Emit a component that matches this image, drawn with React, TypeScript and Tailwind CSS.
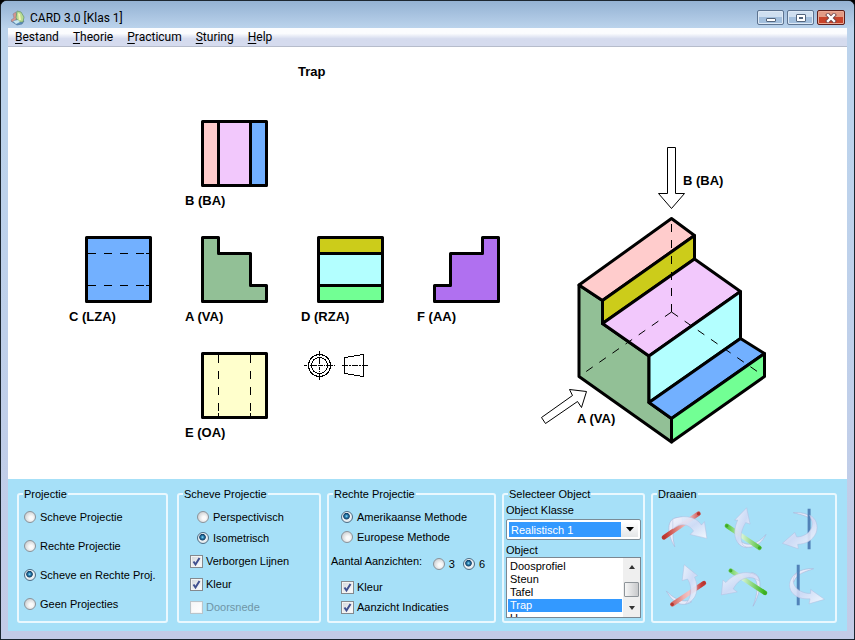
import { useState, type ReactNode } from "react";

const MENU = ["Bestand", "Theorie", "Practicum", "Sturing", "Help"];
const OBJECTS = ["Doosprofiel", "Steun", "Tafel", "Trap", "U"];

const C = {
  pink: "#ffcccc",
  lilac: "#f2c8fc",
  blue: "#72b0ff",
  sage: "#92c096",
  olive: "#cccc1a",
  cyan: "#b3ffff",
  mint: "#72ff94",
  purple: "#b070f0",
  cream: "#ffffcc",
};

function Logo() {
  return (
    <svg className="h-4 w-4" viewBox="0 0 16 16" aria-hidden="true">
      <path d="M1 11 6 9 14 11 12 14 7 15Z" fill="#5b8fc0" stroke="#4c6f93" strokeWidth=".6" />
      <path d="M3 4 6 2 7 9 2 12 1 10 4 8Z" fill="#d9958c" stroke="#8d8291" strokeWidth=".6" />
      <path d="M7 1 11 2 14 7 13 12 9 12 6 8Z" fill="#b8dc92" stroke="#63906a" strokeWidth=".7" />
      <path d="M8 3 10 4 11 10 9 10Z" fill="#f5f3b4" />
      <path d="M3 11 8 10 10 12 6 14Z" fill="#c9e7ef" />
    </svg>
  );
}

function TitleBar() {
  const button =
    "flex h-[15px] w-[27px] items-center justify-center rounded-[2px] border border-[#5d7390] bg-linear-to-b from-[#cfdff0] from-50% to-[#a3bfdd] to-50% shadow-[inset_0_0_0_1px_#dce8f5]";
  return (
    <header className="flex h-[27px] items-center justify-between bg-linear-to-b from-[#94b2d3] to-[#bbd3ec] pr-[9px] pl-[9px]">
      <h1 className="flex items-center gap-1 pt-[6px] text-[12px] leading-4">
        <Logo />
        CARD 3.0 [Klas 1]
      </h1>
      <div className="flex gap-[3px] pt-[6px]">
        <button aria-label="Minimaliseren" className={button}>
          <svg width="12" height="10" viewBox="0 0 12 10">
            <rect x="1.5" y="5.5" width="9" height="3" rx=".5" fill="#fff" stroke="#53657d" />
          </svg>
        </button>
        <button aria-label="Maximaliseren" className={button}>
          <svg width="12" height="10" viewBox="0 0 12 10">
            <rect x="1.5" y="1.5" width="9" height="7" rx=".5" fill="#fff" stroke="#53657d" />
            <rect x="4.5" y="4.5" width="3" height="1" fill="#8ba4c0" stroke="#53657d" />
          </svg>
        </button>
        <button
          aria-label="Sluiten"
          className="flex h-[15px] w-[28px] items-center justify-center rounded-[2px] border border-[#5e1f1c] bg-linear-to-b from-[#e29b85] from-50% to-[#c8432a] to-50% shadow-[inset_0_0_0_1px_#eba995]"
        >
          <svg width="12" height="10" viewBox="0 0 12 10">
            <path d="M3 2 9 8M9 2 3 8" stroke="#6d4247" strokeWidth="4" strokeLinecap="square" />
            <path d="M3 2 9 8M9 2 3 8" stroke="#fff" strokeWidth="2.4" strokeLinecap="square" />
          </svg>
        </button>
      </div>
    </header>
  );
}

function MenuBar() {
  return (
    <nav className="flex h-[19px] items-center gap-[14px] border-b border-[#b6bccb] bg-linear-to-b from-[#fbfcfe] from-30% to-[#d5dbee] to-60% px-[7px] text-[12px] leading-4">
      {MENU.map((item) => (
        <button key={item}>
          <span className="underline underline-offset-2">{item[0]}</span>
          {item.slice(1)}
        </button>
      ))}
    </nav>
  );
}

function Views() {
  return (
    <g stroke="#000" strokeWidth="3" strokeLinejoin="round">
      <path d="M202.500 121.500h16v64h-16z" fill={C.pink} />
      <path d="M218.500 121.500h32v64h-32z" fill={C.lilac} />
      <path d="M250.500 121.500h16v64h-16z" fill={C.blue} />

      <path d="M86.500 237.500h64v64h-64z" fill={C.blue} />
      <path d="M202.500 237.500h16v16h32v32h16v16h-64z" fill={C.sage} />
      <path d="M318.500 237.500h64v16h-64z" fill={C.olive} />
      <path d="M318.500 253.500h64v32h-64z" fill={C.cyan} />
      <path d="M318.500 285.500h64v16h-64z" fill={C.mint} />
      <path d="M498.500 237.500h-16v16h-32v32h-16v16h64z" fill={C.purple} />
      <path d="M202.500 353.500h64v64h-64z" fill={C.cream} />

      {/* hidden edges */}
      <g strokeWidth="1" strokeDasharray="8 8">
        <path d="M88 253.500H146M146 253.500H150M88 285.500H146M146 285.500H150" />
        <path d="M218.500 355V413M218.500 413V417M250.500 355V413M250.500 413V417" />
      </g>
    </g>
  );
}

function ProjectionSymbol() {
  return (
    <g stroke="#000" fill="none" shapeRendering="crispEdges">
      <circle cx="319.500" cy="365.500" r="11" />
      <circle cx="319.500" cy="365.500" r="8" />
      <path d="M304 365.500H335M319.500 351V380" strokeDasharray="3 1 1 1 7 1 1 1" />
      <path d="M344.500 357.500 363.500 354.500V376.500L344.500 373.500Z" />
      <path d="M342 365.500H368" strokeDasharray="6 1 2 1" />
    </g>
  );
}

function Isometric() {
  return (
    <>
      <g stroke="#000" strokeWidth="3" strokeLinejoin="round">
        <path d="M579 285 602.500 300.500V323.500L649 356V402.500L671.500 418.500V442L579 376.500Z" fill={C.sage} />
        <path d="M671.500 218.500 694.500 235.500 602.500 300.500 579 285Z" fill={C.pink} />
        <path d="M694.500 235.500V259L602.500 323.500V300.500Z" fill={C.olive} />
        <path d="M694.500 259 740.500 291.500 649 356 602.500 323.500Z" fill={C.lilac} />
        <path d="M740.500 291.500V338.500L649 402.500V356Z" fill={C.cyan} />
        <path d="M740.500 338.500 764.500 353.500 671.500 418.500 649 402.500Z" fill={C.blue} />
        <path d="M764.500 353.500V376.500L671.500 442V418.500Z" fill={C.mint} />
      </g>
      <path
        d="M671.500 312V218.500M671.500 312 579 376.500M671.500 312 764.500 376.500"
        stroke="#000"
        fill="none"
        strokeDasharray="8 8"
      />
      <g stroke="#000" fill="#fff">
        <path d="M667.500 147.500H675.500V193.500H684.500L671.500 208.500 658.500 193.500H667.500Z" />
        <path d="M541.500 417.500 572.500 395.500 569.500 389.500 586.500 391.500 581.500 407.500 577.500 401.500 545.500 423.500Z" />
      </g>
    </>
  );
}

function Drawing() {
  return (
    <svg
      className="w-full flex-1 bg-white font-['Liberation_Sans',Arial,sans-serif] text-[13px] font-bold"
      viewBox="8 47 839 432"
      role="img"
      aria-label="Trap"
    >
      <Views />
      <ProjectionSymbol />
      <Isometric />
      <text x="298" y="76">Trap</text>
      <text x="185" y="205">B (BA)</text>
      <text x="69" y="321">C (LZA)</text>
      <text x="185" y="321">A (VA)</text>
      <text x="301" y="321">D (RZA)</text>
      <text x="417" y="321">F (AA)</text>
      <text x="185" y="437">E (OA)</text>
      <text x="683" y="185">B (BA)</text>
      <text x="577" y="423">A (VA)</text>
    </svg>
  );
}

function Group({ title, className = "", children }: { title: string; className?: string; children: ReactNode }) {
  return (
    <fieldset className={`min-w-0 rounded-[3px] border-2 border-[#eaf8fe] ${className}`}>
      <legend className="ml-[4px] px-px leading-[14px]">{title}</legend>
      {children}
    </fieldset>
  );
}

interface ChoiceProps {
  label: string;
  name?: string;
  checked?: boolean;
}

function Radio({ label, name, checked }: ChoiceProps) {
  return (
    <label className="flex items-center gap-1 leading-[14px] whitespace-nowrap">
      <input
        type="radio"
        name={name}
        defaultChecked={checked}
        className="h-3 w-3 shrink-0 appearance-none rounded-full border border-[#8b9299] bg-[radial-gradient(circle_at_60%_60%,#fafafa_20%,#cfd2d4_75%)] checked:border-[#4e6d85] checked:bg-[radial-gradient(circle_at_45%_42%,#8fe0fa_0,#2a7fb0_18%,#123f66_36%,#eef3f6_46%,#dfe6ea_75%)]"
      />
      {label}
    </label>
  );
}

function Check({ label, checked, disabled }: ChoiceProps & { disabled?: boolean }) {
  return (
    <label className={`flex items-center gap-[3px] leading-[14px] whitespace-nowrap ${disabled ? "text-[#6f95a6]" : ""}`}>
      <span className="relative flex">
        <input
          type="checkbox"
          defaultChecked={checked}
          disabled={disabled}
          className="peer h-[13px] w-[13px] appearance-none border border-[#84898e] bg-white bg-linear-to-br from-[#d3d7db] to-white shadow-[inset_0_0_0_1px_#f4f4f4] disabled:border-[#b9c5cb] disabled:from-[#f4f6f7]"
        />
        <svg className="pointer-events-none absolute inset-0 hidden h-[13px] w-[13px] peer-checked:block" viewBox="0 0 13 13">
          <path d="M3.500 6.500 5.500 9.500 9.500 3" fill="none" stroke="#40508f" strokeWidth="2" />
        </svg>
      </span>
      {label}
    </label>
  );
}

function ObjectPicker() {
  const [selected, setSelected] = useState("Trap");
  return (
    <div className="flex flex-col px-[2px]">
      <label htmlFor="klasse" className="mt-[2px] leading-[14px]">
        Object Klasse
      </label>
      <div className="mt-[2px] flex h-[21px] rounded-[2px] border border-[#7b8c97] bg-white p-[2px]">
        <select id="klasse" className="min-w-0 flex-1 appearance-none bg-[#3399ff] px-[2px] text-white">
          <option>Realistisch 1</option>
        </select>
        <span className="flex w-[17px] items-center justify-center bg-linear-to-b from-white to-[#e4e6e8]">
          <svg width="8" height="5" viewBox="0 0 8 5">
            <path d="M0 0H8L4 4.500Z" />
          </svg>
        </span>
      </div>
      <label htmlFor="object" className="mt-[3px] leading-[14px]">
        Object
      </label>
      <div className="flex h-[61px] overflow-hidden border border-[#7b8791] bg-white">
        <select
          id="object"
          size={5}
          value={selected}
          onChange={(e) => setSelected(e.target.value)}
          className="h-[72px] min-w-0 flex-1 appearance-none overflow-hidden p-px pt-[2px] [scrollbar-width:none]"
        >
          {OBJECTS.map((name) => (
            <option
              key={name}
              className="h-[13px] min-h-0 px-[2px] py-0 leading-[13px] checked:bg-[#3399ff] checked:bg-linear-to-r checked:from-[#3399ff] checked:to-[#3399ff] checked:text-white"
            >
              {name}
            </option>
          ))}
        </select>
        <div className="flex w-[17px] flex-col items-center justify-between bg-[#efefef] py-[7px]">
          <svg width="6" height="4" viewBox="0 0 6 4">
            <path d="M0 4H6L3 0Z" fill="#333" />
          </svg>
          <span className="mt-1 h-[15px] w-[15px] rounded-[1px] border border-[#8e9499] bg-linear-to-r from-[#f6f6f6] to-[#c8c9cb]" />
          <svg width="6" height="4" viewBox="0 0 6 4">
            <path d="M0 0H6L3 4Z" fill="#333" />
          </svg>
        </div>
      </div>
    </div>
  );
}

interface Turn {
  label: string;
  box: string;
  fill: string;
  rod: [number, number, number, number];
  tail: string;
  body: string;
}

// each ribbon is a thin tail behind the rod and a broad arrow in front of it
const TURNS: Turn[] = [
  {
    label: "Kantel naar voren",
    box: "656 500 60 57",
    fill: "red",
    rod: [665, 536.5, 700, 512.5],
    tail: "M676 546C669 535 667 520 676 517L683 516 684 523C675 522 672 530 676 546Z",
    body: "M674 518C682 514 697 514 703 524L706 520.500 708.500 537.500 691.500 533.500 695 530C690 523 683 521 674 528Z",
  },
  {
    label: "Kantel naar rechts",
    box: "716 500 60 57",
    fill: "green",
    rod: [729, 524.8, 762, 547],
    tail: "M768.500 533.500C761 543 750 546 744 541L741 543C748 549 762 548 768.500 533.500Z",
    body: "M749 506.500 752.500 523 748 521.500C743 530 742 537 745 544L749 547C737 545 734 532 740 519L737 519Z",
  },
  {
    label: "Draai naar links",
    box: "776 500 60 57",
    fill: "blue",
    rod: [811.5, 507.5, 811.5, 548.5],
    tail: "M795.500 511.500C802 511 810 512 815 517L817 523C813 515 805 514 795.500 511.500Z",
    body: "M812 514C819 517 821 525 818.500 532C815 540 808 543 800 543.500L800.500 548 784.500 542.500 797 531.500 799 536C808 536 820 528 812 514Z",
  },
  {
    label: "Kantel naar achteren",
    box: "656 557 60 57",
    fill: "red",
    rod: [673.5, 603.5, 705.5, 582],
    tail: "M667.500 590C673 596 681 601 689 600L693 601C683 607 674 602 667.500 590Z",
    body: "M685.500 563.500 699 574.500 696 576C701 588 698 600 687 603C693 597 694 586 689 578L683.500 579.500Z",
  },
  {
    label: "Kantel naar links",
    box: "716 557 60 57",
    fill: "green",
    rod: [733, 569.5, 767.5, 592],
    tail: "M755.500 605.500C766 586 764 573 754 571.500L751 576C761 574 762 588 755.500 605.500Z",
    body: "M723.500 594 725 579 728 581.500C736 572 750 568 760 575L762 580C752 573 741 577 735.500 588L739.500 591Z",
  },
  {
    label: "Draai naar rechts",
    box: "776 557 60 57",
    fill: "blue",
    rod: [800.5, 563.5, 800.5, 604.5],
    tail: "M816 567.500C807 567 797 570 794 578L796 581C799 572 807 571 816 567.500Z",
    body: "M799 571.500C790 578 789 589 798 595C803 598 807 598 812.500 598L811.500 603 827 598.500 813 588.500 813 592.500C803 593 789 584 799 571.500Z",
  },
];

function Defs() {
  return (
    <svg width="0" height="0" className="absolute" aria-hidden="true">
      <defs>
        <linearGradient id="red" gradientUnits="userSpaceOnUse" x1="667" x2="703" y1="0" y2="0">
          <stop offset="0" stopColor="#c43b34" />
          <stop offset=".5" stopColor="#eeb0ae" />
          <stop offset=".65" stopColor="#efc2c6" />
          <stop offset="1" stopColor="#c63c38" />
        </linearGradient>
        <linearGradient id="green" gradientUnits="userSpaceOnUse" x1="730" x2="766" y1="0" y2="0">
          <stop offset="0" stopColor="#5cc944" />
          <stop offset=".4" stopColor="#d6f3d4" />
          <stop offset="1" stopColor="#40ba22" />
        </linearGradient>
        <linearGradient id="ribbon" x1="0" x2="1" y1="0" y2="1">
          <stop offset="0" stopColor="#f3f5fd" />
          <stop offset=".5" stopColor="#d3daf5" />
          <stop offset="1" stopColor="#fafbff" />
        </linearGradient>
      </defs>
    </svg>
  );
}

const STROKES: Record<string, string> = { red: "url(#red)", green: "url(#green)", blue: "#5182b8" };
const CAPS: Record<string, string> = { red: "#b33831", green: "#3fa829", blue: "#416da5" };

function TurnButton({ turn }: { turn: Turn }) {
  const [x1, y1, x2, y2] = turn.rod;
  const width = turn.fill === "blue" ? 3 : 4.5;
  return (
    <button aria-label={turn.label} className="flex justify-center">
      <svg className="h-[57px] w-[60px]" viewBox={turn.box}>
        <path d={turn.tail} fill="#e6ebfa" stroke="#a9b5d8" strokeWidth=".6" />
        <path d={`M${x1} ${y1}L${x2} ${y2}`} stroke={STROKES[turn.fill]} strokeWidth={width} strokeLinecap={turn.fill === "blue" ? "butt" : "round"} />
        {turn.fill !== "blue" && (
          <>
            <circle cx={x1} cy={y1} r="1.600" fill={CAPS[turn.fill]} />
            <circle cx={x2} cy={y2} r="1.600" fill={CAPS[turn.fill]} />
          </>
        )}
        <path d={turn.body} fill="url(#ribbon)" fillOpacity=".88" stroke="#b2bcdf" strokeWidth=".5" />
      </svg>
    </button>
  );
}

function Controls() {
  return (
    <div className="grid grid-cols-[154fr_144fr_169fr_143fr_186fr] gap-[6px] bg-[#a6e0f8] pt-2 pr-[10px] pb-2 pl-[9px] font-['Liberation_Sans',Arial,sans-serif] text-[11px]">
      <Group title="Projectie" className="mr-[3px]">
        <div className="flex flex-col gap-[15px] px-[5px] pt-[9px]">
          <Radio name="projectie" label="Scheve Projectie" />
          <Radio name="projectie" label="Rechte Projectie" />
          <Radio name="projectie" label="Scheve en Rechte Proj." checked />
          <Radio name="projectie" label="Geen Projecties" />
        </div>
      </Group>

      <Group title="Scheve Projectie">
        <div className="flex flex-col gap-[7px] px-[18px] pt-[9px]">
          <Radio name="scheef" label="Perspectivisch" />
          <Radio name="scheef" label="Isometrisch" checked />
        </div>
        <div className="flex flex-col gap-[9px] px-[11px] pt-[9px] pb-[7px]">
          <Check label="Verborgen Lijnen" checked />
          <Check label="Kleur" checked />
          <Check label="Doorsnede" disabled />
        </div>
      </Group>

      <Group title="Rechte Projectie">
        <div className="flex flex-col gap-[6px] px-3 pt-[9px]">
          <Radio name="methode" label="Amerikaanse Methode" checked />
          <Radio name="methode" label="Europese Methode" />
        </div>
        <div className="flex items-start pt-[10px] pl-[2px]" role="radiogroup" aria-labelledby="aantal">
          <span id="aantal" className="leading-[14px] whitespace-nowrap">
            Aantal Aanzichten:
          </span>
          <div className="ml-auto flex gap-2 pt-[3px] pr-[9px]">
            <Radio name="aantal" label="3" />
            <Radio name="aantal" label="6" checked />
          </div>
        </div>
        <div className="flex flex-col gap-[6px] px-3 pt-[9px]">
          <Check label="Kleur" checked />
          <Check label="Aanzicht Indicaties" checked />
        </div>
      </Group>

      <Group title="Selecteer Object">
        <ObjectPicker />
      </Group>

      <Group title="Draaien">
        <div className="grid grid-cols-3 px-[2px]">
          {TURNS.map((turn) => (
            <TurnButton key={turn.label} turn={turn} />
          ))}
        </div>
      </Group>
    </div>
  );
}

export default function App() {
  return (
    <div className="bg-black">
      <Defs />
      <div className="flex min-h-screen flex-col overflow-hidden rounded-t-[7px] border border-[#1c2630] bg-linear-to-b from-[#bcd3ec] from-20% to-[#c3cbe7] font-[Roboto,'Noto_Sans',sans-serif] text-black">
        <TitleBar />
        <main className="mx-[7px] mb-2 flex flex-1 flex-col">
          <MenuBar />
          <Drawing />
          <Controls />
        </main>
      </div>
    </div>
  );
}
